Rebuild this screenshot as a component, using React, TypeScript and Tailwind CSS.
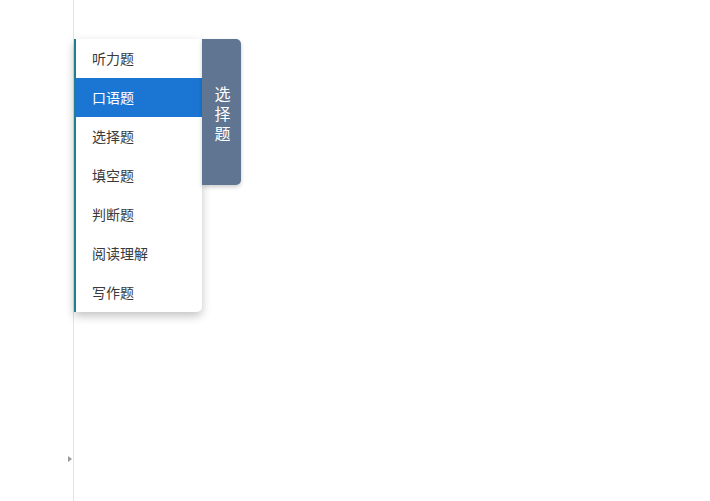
import React from 'react';

const items = ['听力题', '口语题', '选择题', '填空题', '判断题', '阅读理解', '写作题'];

export default function App() {
  const active = 1;

  return (
    <div
      className="flex h-[501px] w-[710px] bg-white"
      style={{ fontFamily: '"Microsoft YaHei", "Noto Sans CJK SC", sans-serif' }}
    >
      {/* 左侧窄栏 */}
      <div className="flex h-full w-[74px] shrink-0 flex-col items-end border-r border-[#e3e3e3] pt-[456px] pr-[1px]">
        <div className="h-0 w-0 border-y-[3px] border-l-[4px] border-y-transparent border-l-[#9a9a9a]" />
      </div>

      <div className="flex items-start pt-[39px]">
        {/* 题型菜单 */}
        <ul className="w-[128px] rounded-tr-[3px] rounded-br-[5px] border-l-2 border-[#1f7f8c] bg-white shadow-[0_4px_10px_rgba(0,0,0,0.24)]">
          {items.map((label, i) => (
            <li
              key={label}
              className={
                i === active
                  ? 'flex h-[39px] items-center bg-[#1a76d2] pl-[16px] text-[14px] text-white'
                  : 'flex h-[39px] items-center pl-[16px] text-[14px] text-[#3a3a3a]'
              }
            >
              {label}
            </li>
          ))}
        </ul>

        {/* 当前选中的标签 */}
        <div className="flex h-[146px] w-[39px] items-center justify-center rounded-r-[5px] bg-[#5f7591] pt-[8px] pl-[2px] text-white shadow-[0_2px_4px_rgba(0,0,0,0.2)]">
          <span className="text-[16px] leading-[20px] tracking-[4px] [writing-mode:vertical-rl]">选择题</span>
        </div>
      </div>
    </div>
  );
}
